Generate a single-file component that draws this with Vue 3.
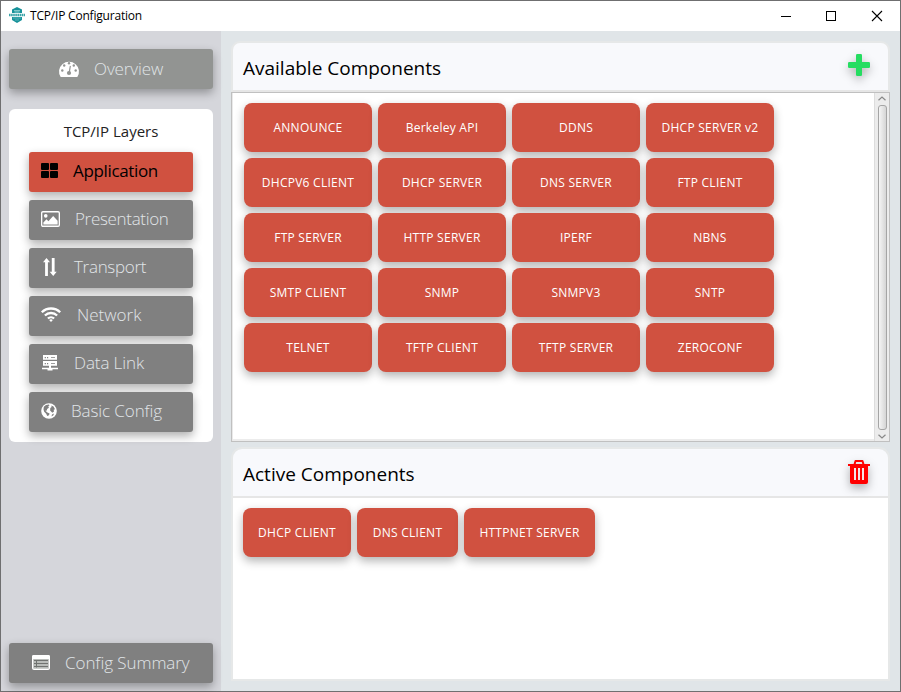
<script setup>
const layers = [
  { label: 'Application', icon: 'grid', active: true, ls: -0.35 },
  { label: 'Presentation', icon: 'image', ls: -0.32 },
  { label: 'Transport', icon: 'arrows', ls: -0.3 },
  { label: 'Network', icon: 'wifi', ls: 0 },
  { label: 'Data Link', icon: 'server', ls: -0.1 },
  { label: 'Basic Config', icon: 'globe', ls: -0.1 },
]
const available = [
  'ANNOUNCE', 'Berkeley API', 'DDNS', 'DHCP SERVER v2',
  'DHCPV6 CLIENT', 'DHCP SERVER', 'DNS SERVER', 'FTP CLIENT',
  'FTP SERVER', 'HTTP SERVER', 'IPERF', 'NBNS',
  'SMTP CLIENT', 'SNMP', 'SNMPV3', 'SNTP',
  'TELNET', 'TFTP CLIENT', 'TFTP SERVER', 'ZEROCONF',
]
const active = [
  { label: 'DHCP CLIENT', width: 108 },
  { label: 'DNS CLIENT', width: 101 },
  { label: 'HTTPNET SERVER', width: 131 },
]
</script>

<template>
  <div class="window">
    <header class="titlebar">
      <svg class="logo" width="16" height="16" viewBox="0 0 16 16">
        <path d="M8 0 13 2.6V6H3V2.6z" fill="#169199" />
        <path d="M3 10h10v3l-5 3-5-3z" fill="#169199" />
        <path d="M5 3.6h6M5.5 5h5" stroke="#a9dadb" stroke-width=".8" />
        <path d="M0 8h16" stroke="#3aa3a8" stroke-width="2.6" stroke-dasharray="1.6 .5" />
        <path d="M4 11h8M6 13h4" stroke="#73c3c6" stroke-width=".7" />
      </svg>
      <span class="caption">TCP/IP Configuration</span>
      <svg class="controls" width="102" height="12" viewBox="0 0 102 12" fill="none" stroke="#000">
        <path d="M0 6.5h10M45.500 1.500h9v9h-9z" shape-rendering="crispEdges" />
        <path d="M91 1l10 10M101 1L91 11" stroke-width="1.1" />
      </svg>
    </header>

    <div class="body">
      <aside class="sidebar">
        <button class="btn overview">
          <svg width="20" height="17" viewBox="0 0 20 17">
            <path d="M1.700 17A10 9.800 0 1 1 18.300 17z" fill="#fff" />
            <g fill="#929492">
              <circle cx="3.300" cy="10.500" r="1.200" /><circle cx="5.200" cy="5.500" r="1.200" />
              <circle cx="10" cy="3.300" r="1.200" /><circle cx="14.800" cy="5.500" r="1.200" />
              <circle cx="16.700" cy="10.500" r="1.200" /><circle cx="10" cy="13" r="2.100" />
              <path d="M10.800 5.700l1.100.2-1.100 7.200-1.300-.2z" />
            </g>
          </svg>
          <span>Overview</span>
        </button>

        <nav class="layers">
          <h2>TCP/IP Layers</h2>
          <button v-for="l in layers" :key="l.label" class="btn layer" :class="{ selected: l.active }">
            <svg v-if="l.icon === 'grid'" class="grid" width="17" height="15" viewBox="0 0 17 15">
              <rect width="8" height="7" rx="1" /><rect x="9" width="8" height="7" rx="1" />
              <rect y="8" width="8" height="7" rx="1" /><rect x="9" y="8" width="8" height="7" rx="1" />
            </svg>
            <svg v-else-if="l.icon === 'image'" class="image" width="19" height="16" viewBox="0 0 20 16" preserveAspectRatio="none" fill="#fff">
              <rect x=".7" y=".7" width="18.600" height="14.600" rx="1.300" fill="none" stroke="#fff" stroke-width="1.400" />
              <circle cx="5" cy="4.800" r="1.900" />
              <path d="M2.500 13.400V11.500L5.800 8.300 7.800 10.200 12.800 5 17.500 9.700v3.700z" />
            </svg>
            <svg v-else-if="l.icon === 'arrows'" class="arrows" width="14" height="18" viewBox="0 0 14 18" fill="#fff">
              <path d="M3.500 0 7 4.200H4.900V18H2.100V4.200H0z" />
              <path d="M10.200 18 6.700 13.800H8.800V0h2.800v13.800h2.100z" />
            </svg>
            <svg v-else-if="l.icon === 'wifi'" class="wifi" width="20" height="15" viewBox="0 0 20 15" fill="none" stroke="#fff" stroke-width="2.300">
              <path d="M.8 5.300A13 13 0 0 1 19.200 5.300M3.900 8.500a8.700 8.700 0 0 1 12.200 0M6.900 11.500a4.600 4.600 0 0 1 6.200 0" />
              <path d="M10 15l-1.900-2q1.900-1.400 3.800 0z" fill="#fff" stroke="none" />
            </svg>
            <svg v-else-if="l.icon === 'server'" class="server" width="16" height="16" viewBox="0 0 16 16">
              <path d="M1 0h14v4.800H1zM1 6h14v4.800H1zM7 10.800h2v2h7v1.500h-5.500V15.500h-5v-1.200H0v-1.500h7z" fill="#fff" />
              <path d="M2.700 2h1.200v1.200H2.700zM5 2h1.200v1.200H5zM2.700 8h1.200v1.200H2.700zM5 8h1.200v1.200H5zM9 2.200h4v.8H9zM9 8.200h4v.8H9z" fill="#808080" />
            </svg>
            <svg v-else class="globe" width="16" height="16" viewBox="0 0 16 16">
              <circle cx="8" cy="8" r="7.800" fill="#fff" />
              <path d="M2.800 3.800 5 2l2.800-.5.8.8-1.300 1 .6 1.400-1.800 1.200-.2 1.700-1.500.2 2 1.600 2.200 1.200-.6 1.700-1.800.8-1-2.300-2-2-.7-2.300zM10.300 2.500l2.200 1 1.500 2.700-1.300.5.300 1.800-1.700 1.300-2.200-2.200.2-2.600 1.300-1zM11 11.500l2-.9-.6 1.700-1.900 1.300z" fill="#808080" />
            </svg>
            <span :style="{ letterSpacing: l.ls + 'px' }">{{ l.label }}</span>
          </button>
        </nav>

        <button class="btn summary">
          <svg width="18" height="15" viewBox="0 0 18 15">
            <rect x=".6" y=".6" width="16.800" height="13.800" rx="1.500" fill="#b9bcb9" stroke="#fff" stroke-width="1.200" />
            <path d="M0 1.500Q0 0 1.500 0h15Q18 0 18 1.500V4H0z" fill="#fff" />
            <path d="M2 5.500h14M2 8.500h14M2 11.500h14M4.500 5v7.500" stroke="#707370" fill="none" />
          </svg>
          <span>Config Summary</span>
        </button>
      </aside>

      <main class="content">
        <section class="panel available">
          <header class="head">
            <h1>Available Components</h1>
            <svg class="plus" width="22" height="22" viewBox="0 0 22 22" fill="#25dd61">
              <rect x="8" width="6" height="22" rx="1.300" /><rect y="8" width="22" height="6" rx="1.300" />
            </svg>
          </header>
          <div class="scroll">
            <div class="tiles">
              <button v-for="c in available" :key="c" class="tile">{{ c }}</button>
            </div>
            <div class="bar">
              <svg width="8" height="5" viewBox="0 0 8 5"><path d="M.5 4.300 4 1l3.500 3.300" fill="none" stroke="#888" stroke-width="1.200" /></svg>
              <div class="thumb"></div>
              <svg width="8" height="5" viewBox="0 0 8 5"><path d="M.5.700 4 4 7.500.700" fill="none" stroke="#888" stroke-width="1.200" /></svg>
            </div>
          </div>
        </section>

        <section class="panel active">
          <header class="head">
            <h1>Active Components</h1>
            <svg class="trash" width="22" height="24" viewBox="0 0 22 24">
              <path d="M6.500 4.500 7.500 1h7l1 3.500" fill="none" stroke="#f00" stroke-width="2" stroke-linejoin="round" />
              <path d="M0 4h22v2h-2v16q0 2-2 2H4q-2 0-2-2V6H0z" fill="#f00" />
              <path d="M7 8v12M11 8v12M15 8v12" stroke="#f4e5e7" stroke-width="2" />
            </svg>
          </header>
          <div class="row">
            <button v-for="c in active" :key="c.label" class="tile" :style="{ width: c.width + 'px' }">{{ c.label }}</button>
          </div>
        </section>
      </main>
    </div>
  </div>
</template>

<style>
body { margin: 0; overflow: hidden; }
</style>

<style scoped>
* { box-sizing: border-box; }
.window {
  width: 901px; height: 692px; display: flex; flex-direction: column;
  border: 1px solid #6f6f70; background: #e0e5e8;
  font-family: "Open Sans", "Noto Sans", sans-serif; color: #000;
}
h1, h2 { margin: 0; font-weight: 400; white-space: nowrap; }
button { border: 0; padding: 0; font-family: inherit; white-space: nowrap; }
svg { flex: none; display: block; overflow: visible; }
.titlebar { height: 30px; flex: none; display: flex; align-items: center; background: #fff; padding: 0 17px 0 8px; }
.logo { margin-top: -2px; }
.caption { margin-left: 5px; margin-top: -1px; font-size: 12px; letter-spacing: -0.2px; }
.controls { margin-left: auto; margin-top: -1px; }
.body { flex: 1; display: flex; min-height: 0; }
.sidebar { width: 220px; background: #d5d6db; padding: 18px 8px 8px; display: flex; flex-direction: column; }
.btn {
  height: 40px; flex: none; display: flex; align-items: center; border-radius: 3px;
  background: #808080; color: #e0e5e8; font-size: 17px; font-weight: 300;
  box-shadow: 0 4px 10px rgba(0, 0, 0, .32);
}
.overview { background: #929492; padding: 0 0 2px 50px; }
.overview span { margin-left: 15px; letter-spacing: -0.1px; }
.summary { margin-top: auto; padding: 0 0 2px 23px; }
.summary span { margin-left: 15px; letter-spacing: -0.07px; }
.layers {
  height: 333px; margin-top: 20px; padding: 10px 20px 0; background: #fff; border-radius: 6px;
  display: flex; flex-direction: column; gap: 8px;
}
.layers h2 { height: 25px; line-height: 24px; text-align: center; font-size: 15px; color: #222; }
.layer { padding: 0 0 3px 12px; }
.layer span { margin-left: 15px; }
.layer.selected { color: #000; background: #d05140; font-weight: 400; }
.arrows { margin: 0 2px; }
.wifi { margin-right: 1px; }
.server { margin: 0 1px; }
.globe { margin-right: -1px; }
.content { flex: 1; display: flex; flex-direction: column; padding: 10px; gap: 5px; }
.panel { width: 659px; display: flex; flex-direction: column; border-radius: 11px 11px 0 0; }
.available { height: 401px; }
.active { height: 234px; border: 2px solid #e6e8e8; }
.head { flex: none; display: flex; align-items: flex-start; justify-content: space-between; background: #f8f9fc; border-radius: 9px 9px 0 0; }
.available .head { height: 51px; border: 2px solid #e6e8e8; border-bottom: 2px solid #e6e6e6; padding: 0 18px 0 10px; }
.active .head { height: 49px; border-bottom: 2px solid #e6e6e6; padding: 0 18px 0 10px; }
.head h1 { font-size: 19px; line-height: 26px; margin-top: 12px; letter-spacing: 0; }
.plus { margin-top: 11px; filter: drop-shadow(0 4px 5px rgba(0, 0, 0, .3)); }
.trash { margin-top: 11px; filter: drop-shadow(0 4px 5px rgba(0, 0, 0, .3)); }
.scroll { height: 350px; display: flex; border: 1px solid #c0c0c0; background: #fff; box-shadow: inset 1px 0 #e9e9e9, inset 0 -2px #ececec; }
.tiles { flex: 1; display: grid; grid-template-columns: repeat(4, 128px); grid-auto-rows: 49px; gap: 6px; padding: 10px 0 0 12px; }
.tile {
  height: 49px; flex: none; border-radius: 8px; background: #d05140; color: #fff;
  font-size: 12px; letter-spacing: .26px; text-align: center; box-shadow: 0 4px 10px rgba(0, 0, 0, .3);
}
.bar { width: 15px; flex: none; display: flex; flex-direction: column; align-items: center; justify-content: space-between; padding: 3px 0 2px; background: #ececec; border-left: 1px solid #ddd; }
.thumb { width: 9px; height: 325px; border: 1px solid #a5a5a5; border-radius: 3px; background: linear-gradient(90deg, #f5f5f5, #d5d5d5); }
.row { flex: 1; display: flex; align-items: flex-start; gap: 6px; padding: 10px; background: #fff; }
</style>
